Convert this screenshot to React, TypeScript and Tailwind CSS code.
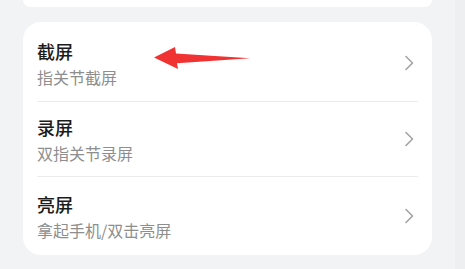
const ROWS = [
  { title: '截屏', desc: '指关节截屏', h: 'h-[79px] pt-[3px]' },
  { title: '录屏', desc: '双指关节录屏', h: 'h-[74px]' },
  { title: '亮屏', desc: '拿起手机/双击亮屏', h: 'h-[78px]' },
];

function Chevron() {
  return (
    <svg width="10" height="16" viewBox="0 0 10 16" fill="none" className="shrink-0">
      <path d="M2 1.5L8.5 8L2 14.5" stroke="#a3a3a3" strokeWidth="1.6" strokeLinecap="round" strokeLinejoin="round" />
    </svg>
  );
}

export default function App() {
  return (
    <div
      className="relative flex h-[269px] w-[465px] overflow-hidden bg-[#f2f3f5]"
      style={{ fontFamily: '"Noto Sans CJK SC", "Noto Sans", sans-serif' }}
    >
      <div className="flex w-[455px] flex-col pl-[23px] pr-[23px]">
        <div className="h-[7px] w-[409px] rounded-b-[16px] bg-white" />
        <div className="mt-[15px] w-[409px] rounded-[18px] bg-white">
          {ROWS.map((row, i) => (
            <div key={row.title}>
              {i > 0 && <div className="mx-[14px] h-px bg-[#ececec]" />}
              <div className={`flex items-center justify-between pl-[14px] pr-[18px] ${row.h}`}>
                <div className="flex flex-col">
                  <span className="text-[18px] leading-[24px] font-medium text-[#1c1c1c]">{row.title}</span>
                  <span className="mt-[3px] text-[16px] leading-[22px] text-[#8e8e8e]">{row.desc}</span>
                </div>
                <Chevron />
              </div>
            </div>
          ))}
        </div>
      </div>
      <div className="w-[10px] bg-[#eeeff1]" />

      <svg className="absolute left-0 top-0" width="465" height="269" viewBox="0 0 465 269">
        <polygon points="154,57.5 175,47 176,53.5 250,58.3 177,63.3 178,69" fill="#f03232" />
      </svg>
    </div>
  );
}
